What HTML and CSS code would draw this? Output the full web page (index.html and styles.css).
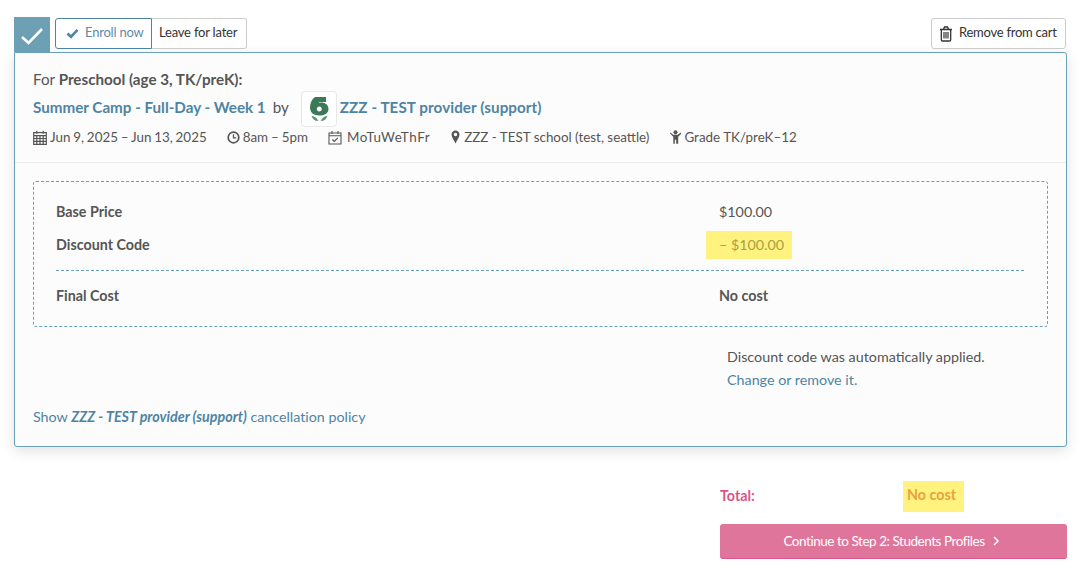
FILE: index.html
```html
<!DOCTYPE html>
<html lang="en">
<head>
<meta charset="utf-8">
<title>Cart</title>
<link rel="stylesheet" href="styles.css">
</head>
<body>
<main class="page">
  <div class="toolbar">
    <div class="checkbox">
      <svg width="24" height="18" viewBox="0 0 24 18"><path d="M2 10l6.500 6L22 2" fill="none" stroke="#fff" stroke-width="2.600"/></svg>
    </div>
    <div class="btn-group">
      <button class="btn btn-active">
        <svg width="13" height="11" viewBox="0 0 13 11"><path d="M1.500 5.500l3.500 3.300 6.500-7" fill="none" stroke="#4e84a3" stroke-width="2.600"/></svg>
        <span class="btn-text">Enroll now</span>
      </button>
      <button class="btn btn-plain"><span class="btn-text">Leave for later</span></button>
    </div>
    <button class="btn btn-remove">
      <svg width="14" height="16" viewBox="0 0 14 16"><path d="M1 3.500h12M4.500 3.300l1-2.300h3l1 2.300M2.300 3.500v10.300c0 .7.500 1.200 1.200 1.200h7c.7 0 1.200-.5 1.200-1.200V3.500" fill="none" stroke="#333" stroke-width="1.300"/><path d="M5 6v6.500M7 6v6.500M9 6v6.500" stroke="#333" stroke-width="1.200"/></svg>
      <span class="btn-text">Remove from cart</span>
    </button>
  </div>

  <section class="card">
    <header class="card-head">
      <p class="for-line">For <strong>Preschool (age 3, TK/preK):</strong></p>
      <div class="title-line">
        <a class="link strong title-text">Summer Camp - Full-Day - Week 1</a>
        <span class="by title-text">by</span>
        <span class="logo">
          <svg width="22" height="27" viewBox="0 0 22 27"><path d="M7 1H18V6H12.500C11.500 6 10.800 6.300 10.300 6.900 11 6.600 12 6.400 13 6.400 17.500 6.400 20.500 9 20.500 13 20.500 17 17 19.500 11.500 19.500 5.500 19.500 2 16.500 2 11.500 2 7 4 3 7 1ZM11.300 10.500c-1.400 0-2.500 1.100-2.500 2.500s1.100 2.500 2.500 2.500 2.500-1.100 2.500-2.500-1.100-2.500-2.500-2.500z" fill="#3c7a57" fill-rule="evenodd"/><path d="M3.500 20c2.500 0 5.500 1.500 6.800 5-3 .2-5.800-1.800-6.800-5zM19.500 20c-2.500 0-5.500 1.500-6.800 5 3 .2 5.800-1.800 6.800-5z" fill="#5f9378"/></svg>
        </span>
        <a class="link strong title-text provider">ZZZ - TEST provider (support)</a>
      </div>
      <div class="meta">
        <span class="meta-item meta-date">
          <svg width="14" height="15" viewBox="0 0 14 15"><path d="M.700 2.700h12.600v11.600H.700zM.700 5.700h12.600M3.800 .800v3M10.200 .800v3M.700 8.500h12.600M.700 11.300h12.600M3.800 5.700v8.600M7 5.700v8.600M10.200 5.700v8.600" fill="none" stroke="#555" stroke-width="1.200"/></svg>
          <span>Jun 9, 2025 – Jun 13, 2025</span>
        </span>
        <span class="meta-item meta-time">
          <svg width="13" height="13" viewBox="0 0 13 13"><circle cx="6.500" cy="6.500" r="5.300" fill="none" stroke="#555" stroke-width="1.700"/><path d="M6.500 3.200v3.600H9.300" fill="none" stroke="#555" stroke-width="1.300"/></svg>
          <span>8am – 5pm</span>
        </span>
        <span class="meta-item meta-days">
          <svg width="14" height="15" viewBox="0 0 14 15"><path d="M1 3h12v11H1zM1 5.800h12M4 1v3M10 1v3" fill="none" stroke="#555" stroke-width="1.100"/><path d="M4.300 9.500l2 2 3.500-3.700" fill="none" stroke="#555" stroke-width="1.200"/></svg>
          <span>MoTuWeThFr</span>
        </span>
        <span class="meta-item meta-place">
          <svg width="9" height="14" viewBox="0 0 9 14"><path d="M4.500.500C2.200.500.500 2.200.500 4.500c0 2.500 2.500 5.500 4 9 1.500-3.500 4-6.500 4-9 0-2.300-1.700-4-4-4zm0 2.300a1.700 1.700 0 1 1 0 3.400 1.700 1.700 0 0 1 0-3.400z" fill="#555" fill-rule="evenodd"/></svg>
          <span>ZZZ - TEST school (test, seattle)</span>
        </span>
        <span class="meta-item meta-grade">
          <svg width="11" height="14" viewBox="0 0 11 14"><circle cx="5.500" cy="2.300" r="2" fill="#555"/><path d="M.300 2.500l3 2.300h4.400l3-2.300.8 1-3.300 3.300v6.900H6.200V9.800H4.800v3.900H3.300V6.800L0 3.500z" fill="#555"/></svg>
          <span>Grade TK/preK–12</span>
        </span>
      </div>
    </header>

    <div class="card-body">
      <div class="prices">
        <div class="price-row">
          <span class="price-label">Base Price</span>
          <span class="price-value">$100.00</span>
        </div>
        <div class="price-row">
          <span class="price-label">Discount Code</span>
          <span class="price-value"><mark class="hl">– $100.00</mark></span>
        </div>
        <div class="price-row price-final">
          <span class="price-label">Final Cost</span>
          <span class="price-value strong">No cost</span>
        </div>
      </div>
      <div class="note">
        <p>Discount code was automatically applied.</p>
        <p class="link">Change or remove it.</p>
      </div>
      <p class="policy"><a class="link">Show <b><i>ZZZ - TEST provider (support)</i></b> cancellation policy</a></p>
    </div>
  </section>

  <aside class="summary">
    <div class="total">
      <span class="total-label">Total:</span>
      <mark class="total-value">No cost</mark>
    </div>
    <button class="continue">Continue to Step 2: Students Profiles
      <svg class="chevron" width="8" height="10" viewBox="0 0 8 10"><path d="M2 1l4 4-4 4" fill="none" stroke="#fff" stroke-width="1.500"/></svg>
    </button>
  </aside>
</main>
</body>
</html>
```

FILE: styles.css
```css
* { box-sizing: border-box; }
html, body { margin: 0; padding: 0; background: #fff; }
body {
  font-family: Lato, "Open Sans", sans-serif;
  font-size: 14.300px;
  line-height: 20px;
  color: #555;
}
p { margin: 0; }
.page { padding: 17px 20px 0 14px; }
.strong, strong { font-weight: 700; }
.link { color: #4e84a3; }

.toolbar { display: flex; align-items: flex-start; height: 35px; }
.checkbox {
  width: 36px; height: 35px;
  background: #6d9fb5;
  display: flex; align-items: center; justify-content: center;
  padding-top: 2px;
}
.btn {
  font: inherit; font-size: 13px; letter-spacing: -0.2px;
  height: 31px; margin: 0; background: #fff;
  display: inline-flex; align-items: center; gap: 6px;
  border: 1px solid #ccc; border-radius: 3px; color: #333;
}
.btn-text { margin-bottom: 3px; }
.btn-group { display: flex; margin: 1px 0 0 5px; }
.btn-active {
  width: 97px; padding: 0 0 0 10px;
  border-color: #4e84a3; color: #5f8ba5;
  border-radius: 3px 0 0 3px;
}
.btn-plain {
  width: 95px; padding: 0 0 0 7px;
  border-left: 0; border-radius: 0 3px 3px 0;
}
.btn-remove { margin: 1px 1px 0 auto; width: 135px; padding: 0 0 0 7px; gap: 6px; letter-spacing: -0.25px; }

.card {
  border: 1px solid #68a2ba;
  border-radius: 0 3px 3px 3px;
  background: #fcfcfc;
  height: 395px;
  box-shadow: 0 4px 14px rgba(0, 0, 0, 0.12);
}
.card-head { height: 110px; padding: 16px 18px 0; border-bottom: 1px solid #ebebeb; }
.for-line { font-size: 15.200px; }
.title-line { display: flex; align-items: center; height: 36px; margin-top: 2px; font-size: 15.200px; white-space: pre; }
.title-text { margin-bottom: 4px; }
.provider { letter-spacing: 0.08px; }
.by { margin-left: 7px; }
.logo {
  width: 36px; height: 36px; margin: 0 3px 0 12px;
  border: 1px solid #e8e8e8; border-radius: 4px; background: #fff;
  display: flex; align-items: center; justify-content: center;
}
.meta { display: flex; gap: 20px; font-size: 13.400px; }
.meta-item { display: inline-flex; align-items: center; gap: 3px; }
.meta-date { word-spacing: -0.6px; }
.meta-time { word-spacing: -0.5px; }
.meta-days { gap: 5px; letter-spacing: 0.6px; }
.meta-place { gap: 4px; margin-left: 1px; }
.meta-grade { margin-left: 1px; }

.card-body { padding: 18px 18px 0; }
.prices {
  height: 146px; padding: 13px 23px 0 22px;
  border: 1px dashed #68a2ba; border-radius: 3px;
}
.price-row { display: flex; align-items: center; height: 33px; }
.price-label { width: 663px; font-weight: 700; }
.price-final {
  height: 50px; margin-top: 9px;
  border-top: 1px dashed #68a2ba;
}
.hl {
  display: inline-block; height: 28px; line-height: 28px;
  margin-left: -13px; padding: 0 8px 0 13px;
  background: #fff27f; color: #a9a040;
}
.note { margin: 18px 0 0 694px; line-height: 23px; }
.policy { margin-top: 16px; letter-spacing: -0.01px; }

.summary { margin: 33px 0 0 706px; }
.total { display: flex; align-items: center; height: 33px; font-weight: 700; }
.total-label { width: 183px; color: #d9558a; margin-bottom: 2px; }
.total-value {
  background: #fff27f; color: #e8a33d;
  height: 31px; line-height: 27px; padding: 0 4px; width: 61px;
}
.continue {
  display: flex; align-items: center; justify-content: center; gap: 7px;
  width: 347px; height: 35px; margin-top: 11px;
  border: 0; border-bottom: 1px solid #d9558a; border-radius: 3px;
  background: #e0759b; color: #fff;
  font: inherit; font-size: 13.500px; letter-spacing: -0.46px;
}
.chevron { margin-right: 4px; }
```
